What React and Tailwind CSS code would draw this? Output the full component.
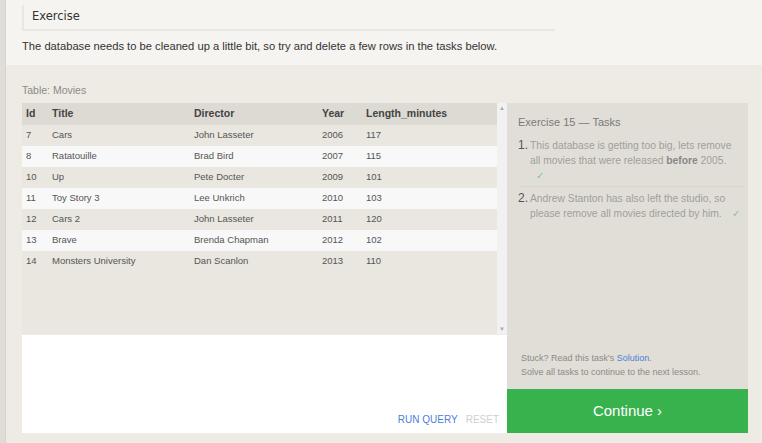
const movies = [
  { id: 7, title: "Cars", director: "John Lasseter", year: 2006, len: 117 },
  { id: 8, title: "Ratatouille", director: "Brad Bird", year: 2007, len: 115 },
  { id: 10, title: "Up", director: "Pete Docter", year: 2009, len: 101 },
  { id: 11, title: "Toy Story 3", director: "Lee Unkrich", year: 2010, len: 103 },
  { id: 12, title: "Cars 2", director: "John Lasseter", year: 2011, len: 120 },
  { id: 13, title: "Brave", director: "Brenda Chapman", year: 2012, len: 102 },
  { id: 14, title: "Monsters University", director: "Dan Scanlon", year: 2013, len: 110 },
];

// column widths (px) for Id / Title / Director / Year / Length
const cols = "grid grid-cols-[26px_142px_128px_44px_1fr]";

function Check() {
  return <span className="text-[#7fc98d] text-[10px]">✓</span>;
}

export default function App() {
  return (
    <div className="w-[762px] h-[443px] flex overflow-hidden font-['Liberation_Sans',Arial,sans-serif] text-[#333]">
      <div className="w-[6px] bg-[#e0dcd7] border-r border-[#d6d2cc]" />

      <div className="flex-1 flex flex-col">
        {/* top: exercise intro */}
        <div className="bg-[#f5f4f1] h-[65px] pl-[16px] pr-[207px] pt-[5px]">
          <div className="h-[26px] border-l-2 border-b-2 border-[#e9e7e1] pl-[8px] flex items-center">
            <span className="font-['DejaVu_Sans',sans-serif] text-[11.5px] text-[#333]">Exercise</span>
          </div>
          <p className="mt-[7px] text-[11.2px] text-[#333]">
            The database needs to be cleaned up a little bit, so try and delete a few rows in the tasks below.
          </p>
        </div>

        {/* bottom: query area */}
        <div className="flex-1 bg-[#eeebe4] pl-[16px] pr-[13px]">
          <div className="text-[10.5px] text-[#8a8a88] mt-[18px] h-[20px]">Table: Movies</div>

          <div className="flex h-[330px]">
            <div className="w-[485px] flex flex-col">
              <div className="h-[231px] flex">
                <div className="w-[475px] bg-[#e9e7e0] text-[9.5px] text-[#555]">
                  <div className={`${cols} h-[22px] items-center bg-[#dcdad2] pl-[4px] text-[10.5px] font-bold text-[#444]`}>
                    <span>Id</span>
                    <span>Title</span>
                    <span>Director</span>
                    <span>Year</span>
                    <span>Length_minutes</span>
                  </div>
                  {movies.map((m, i) => (
                    <div
                      key={m.id}
                      className={`${cols} h-[21px] items-center pl-[4px] ${i % 2 ? "bg-[#f8f8f8]" : "bg-[#e9e7e0]"}`}
                    >
                      <span>{m.id}</span>
                      <span>{m.title}</span>
                      <span>{m.director}</span>
                      <span>{m.year}</span>
                      <span>{m.len}</span>
                    </div>
                  ))}
                </div>
                <div className="w-[10px] bg-[#f1f1f1] flex flex-col items-center justify-between py-[2px] text-[6px] text-[#aaa] leading-none">
                  <span>▲</span>
                  <span>▼</span>
                </div>
              </div>
              <div className="mt-px flex-1 bg-white flex items-end justify-end pb-[6px] pr-[8px] gap-[8px] text-[10px] uppercase">
                <span className="text-[#4d80d8]">Run query</span>
                <span className="text-[#cfcfcf]">Reset</span>
              </div>
            </div>

            <div className="w-[241px] flex flex-col">
              <div className="flex-1 bg-[#e1ded7] pl-[11px] pr-[4px] pt-[11px] flex flex-col">
                <div className="text-[11px] text-[#7a7a7a]">Exercise 15 — Tasks</div>
                <ol className="mt-[7px] text-[10.3px] leading-[15px] text-[#a09f9b]">
                  <li className="flex pb-[3px] border-b border-[#d8d5cd]">
                    <span className="w-[12px] text-[12px] text-[#555]">1.</span>
                    <span className="flex-1">
                      This database is getting too big, lets remove all movies that were released{" "}
                      <b className="text-[#888]">before</b> 2005.
                      <br />
                      <span className="pl-[6px]"><Check /></span>
                    </span>
                  </li>
                  <li className="flex pt-[4px]">
                    <span className="w-[12px] text-[12px] text-[#555]">2.</span>
                    <span className="flex-1">
                      Andrew Stanton has also left the studio, so please remove all movies directed by him.
                      <span className="pl-[10px]"><Check /></span>
                    </span>
                  </li>
                </ol>
                <div className="mt-auto pb-[10px] pl-[3px] text-[9px] leading-[14px] text-[#8b8a86]">
                  <div>
                    Stuck? Read this task's <span className="text-[#4d80d8]">Solution</span>.
                  </div>
                  <div>Solve all tasks to continue to the next lesson.</div>
                </div>
              </div>
              <div className="h-[44px] bg-[#37b24d] flex items-center justify-center text-white text-[15px]">
                Continue ›
              </div>
            </div>
          </div>
        </div>
      </div>
    </div>
  );
}
